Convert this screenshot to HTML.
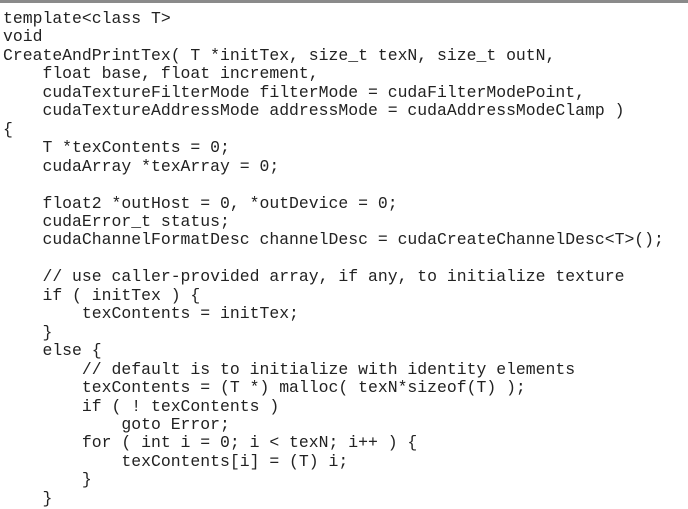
<!DOCTYPE html>
<html><head><style>
html,body{margin:0;padding:0;background:#fff;width:688px;height:509px;overflow:hidden}
.bar{position:absolute;left:0;top:0;width:688px;height:3px;background:#8a8a8a}
pre{position:absolute;left:3px;top:10px;margin:0;font-family:"Liberation Mono",monospace;font-size:16.45px;line-height:18.46px;color:#222}
</style></head><body>
<div class="bar"></div>
<pre>template&lt;class T&gt;
void
CreateAndPrintTex( T *initTex, size_t texN, size_t outN,
    float base, float increment,
    cudaTextureFilterMode filterMode = cudaFilterModePoint,
    cudaTextureAddressMode addressMode = cudaAddressModeClamp )
{
    T *texContents = 0;
    cudaArray *texArray = 0;

    float2 *outHost = 0, *outDevice = 0;
    cudaError_t status;
    cudaChannelFormatDesc channelDesc = cudaCreateChannelDesc&lt;T&gt;();

    // use caller-provided array, if any, to initialize texture
    if ( initTex ) {
        texContents = initTex;
    }
    else {
        // default is to initialize with identity elements
        texContents = (T *) malloc( texN*sizeof(T) );
        if ( ! texContents )
            goto Error;
        for ( int i = 0; i &lt; texN; i++ ) {
            texContents[i] = (T) i;
        }
    }</pre>
</body></html>
